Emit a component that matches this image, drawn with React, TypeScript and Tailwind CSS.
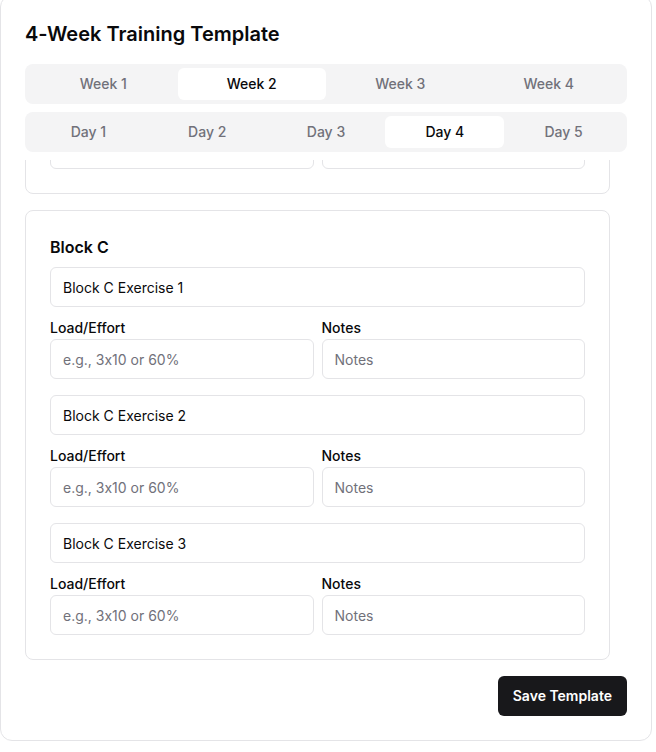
import { useState } from "react";

const weeks = ["Week 1", "Week 2", "Week 3", "Week 4"];
const days = ["Day 1", "Day 2", "Day 3", "Day 4", "Day 5"];
const blocks = ["A", "B", "C"];

function Tabs({
  items,
  active,
  onChange,
}: {
  items: string[];
  active: number;
  onChange: (i: number) => void;
}) {
  return (
    <div className="flex h-10 rounded-lg bg-[#f4f4f5] p-1">
      {items.map((item, i) => (
        <button
          key={item}
          type="button"
          onClick={() => onChange(i)}
          className={`flex-1 rounded-md text-sm font-medium ${
            i === active ? "bg-white text-[#09090b]" : "text-[#71717a]"
          }`}
        >
          {item}
        </button>
      ))}
    </div>
  );
}

function Field({ placeholder, value }: { placeholder: string; value?: string }) {
  return (
    <input
      type="text"
      defaultValue={value}
      placeholder={placeholder}
      className="h-10 w-full rounded-md border border-[#e4e4e7] bg-white px-3 text-sm text-[#09090b] placeholder:text-[#71717a] outline-none"
    />
  );
}

function Block({ name }: { name: string }) {
  return (
    <div className="shrink-0 rounded-lg border border-[#e4e4e7] p-6">
      <h3 className="mb-2 text-base font-semibold leading-6 text-[#09090b]">
        Block {name}
      </h3>
      <div className="space-y-4">
        {[1, 2, 3].map((n) => (
          <div key={n}>
            <Field placeholder="Exercise name" value={`Block ${name} Exercise ${n}`} />
            <div className="mt-3.5 grid grid-cols-2 gap-2">
              <div>
                <label className="mb-1 block text-sm font-medium leading-none text-[#09090b]">
                  Load/Effort
                </label>
                <Field placeholder="e.g., 3x10 or 60%" />
              </div>
              <div>
                <label className="mb-1 block text-sm font-medium leading-none text-[#09090b]">
                  Notes
                </label>
                <Field placeholder="Notes" />
              </div>
            </div>
          </div>
        ))}
      </div>
    </div>
  );
}

export default function App() {
  const [week, setWeek] = useState(1);
  const [day, setDay] = useState(3);

  return (
    <div className="min-h-screen bg-white font-['Inter',sans-serif] [font-feature-settings:'calt'_0]">
      <div className="-mt-[5px] w-[652px] rounded-xl border border-[#e4e4e7] bg-white p-6">
        <h1 className="mb-4 text-xl font-semibold leading-7 text-[#09090b]">
          4-Week Training Template
        </h1>
        <Tabs items={weeks} active={week} onChange={setWeek} />
        <div className="mt-2">
          <Tabs items={days} active={day} onChange={setDay} />
        </div>
        {/* scrolled to the bottom: earlier blocks overflow off the top */}
        <div className="mt-2 flex h-[500px] flex-col justify-end gap-4 overflow-hidden pr-[17px]">
          {blocks.map((b) => (
            <Block key={b} name={b} />
          ))}
        </div>
        <div className="mt-4 flex justify-end">
          <button
            type="button"
            className="h-10 rounded-md bg-[#18181b] px-[15px] text-sm font-semibold text-white"
          >
            Save Template
          </button>
        </div>
      </div>
    </div>
  );
}
